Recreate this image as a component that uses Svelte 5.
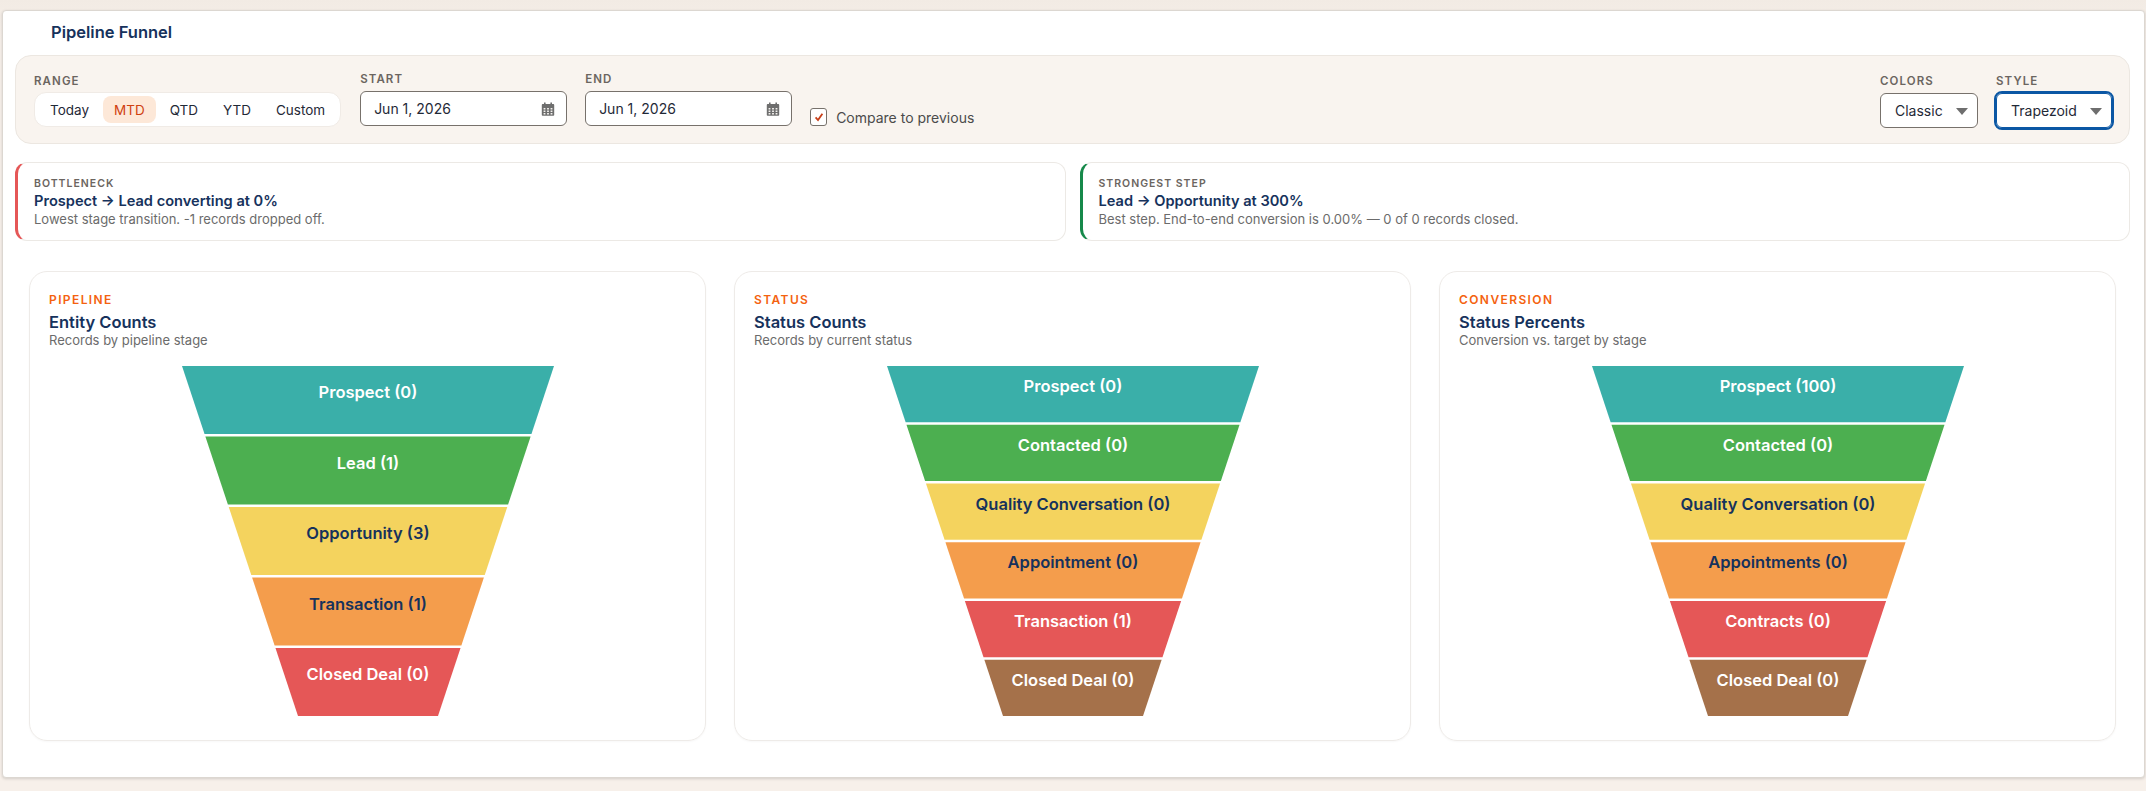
<script>
	const ranges = ['Today', 'MTD', 'QTD', 'YTD', 'Custom'];

	const insights = [
		{
			kind: 'bad',
			label: 'BOTTLENECK',
			title: 'Prospect → Lead converting at 0%',
			text: 'Lowest stage transition. -1 records dropped off.'
		},
		{
			kind: 'good',
			label: 'STRONGEST STEP',
			title: 'Lead → Opportunity at 300%',
			text: 'Best step. End-to-end conversion is 0.00% — 0 of 0 records closed.'
		}
	];

	const teal = { fill: '#3aafa9', ink: '#fff' };
	const green = { fill: '#4caf50', ink: '#fff' };
	const yellow = { fill: '#f4d35e', ink: '#16325c' };
	const orange = { fill: '#f49d4c', ink: '#16325c' };
	const red = { fill: '#e55757', ink: '#fff' };
	const brown = { fill: '#a5714a', ink: '#fff' };

	const charts = [
		{
			eyebrow: 'PIPELINE',
			title: 'Entity Counts',
			sub: 'Records by pipeline stage',
			stages: [
				{ name: 'Prospect (0)', ...teal },
				{ name: 'Lead (1)', ...green },
				{ name: 'Opportunity (3)', ...yellow },
				{ name: 'Transaction (1)', ...orange },
				{ name: 'Closed Deal (0)', ...red }
			]
		},
		{
			eyebrow: 'STATUS',
			title: 'Status Counts',
			sub: 'Records by current status',
			stages: [
				{ name: 'Prospect (0)', ...teal },
				{ name: 'Contacted (0)', ...green },
				{ name: 'Quality Conversation (0)', ...yellow },
				{ name: 'Appointment (0)', ...orange },
				{ name: 'Transaction (1)', ...red },
				{ name: 'Closed Deal (0)', ...brown }
			]
		},
		{
			eyebrow: 'CONVERSION',
			title: 'Status Percents',
			sub: 'Conversion vs. target by stage',
			stages: [
				{ name: 'Prospect (100)', ...teal },
				{ name: 'Contacted (0)', ...green },
				{ name: 'Quality Conversation (0)', ...yellow },
				{ name: 'Appointments (0)', ...orange },
				{ name: 'Contracts (0)', ...red },
				{ name: 'Closed Deal (0)', ...brown }
			]
		}
	];

	const W = 372;
	const H = 350;
	const GAP = 2.5;
	const BOTTOM = 140;

	// trapezoid slices: the sides run straight from the top width to the bottom width
	function slices(stages) {
		const pitch = (H + GAP) / stages.length;
		const half = (y) => (W - (W - BOTTOM) * (y / H)) / 2;
		return stages.map((s, i) => {
			const top = i * pitch;
			const bot = top + pitch - GAP;
			const c = W / 2;
			return {
				...s,
				points: `${c - half(top)},${top} ${c + half(top)},${top} ${c + half(bot)},${bot} ${c - half(bot)},${bot}`,
				labelY: (top + bot) / 2 - 8
			};
		});
	}
</script>

{#snippet calendar()}
	<svg class="cal" viewBox="0 0 14 14" width="14" height="14">
		<path fill="#6e6e6e" d="M3 0.5h1.6v1.6h4.8V0.5H11v1.6h1.4a.8.8 0 0 1 .8.8v10a.8.8 0 0 1-.8.8H1.6a.8.8 0 0 1-.8-.8v-10a.8.8 0 0 1 .8-.8H3z" />
		<path fill="#f4f2ef" d="M2.6 6h1.8v1.5H2.6zM6.1 6h1.8v1.5H6.1zM9.6 6h1.8v1.5H9.6zM2.6 8.6h1.8v1.5H2.6zM6.1 8.6h1.8v1.5H6.1zM9.6 8.6h1.8v1.5H9.6zM2.6 11.1h1.8v1.3H2.6zM6.1 11.1h1.8v1.3H6.1zM9.6 11.1h1.8v1.3H9.6z" />
	</svg>
{/snippet}

<div class="panel">
	<h1>Pipeline Funnel</h1>

	<div class="filters">
		<div class="field range">
			<span class="cap">RANGE</span>
			<div class="segments">
				{#each ranges as r}
					<button class:on={r === 'MTD'}>{r}</button>
				{/each}
			</div>
		</div>

		<div class="field date">
			<span class="cap">START</span>
			<div class="input">Jun 1, 2026 {@render calendar()}</div>
		</div>

		<div class="field date">
			<span class="cap">END</span>
			<div class="input">Jun 1, 2026 {@render calendar()}</div>
		</div>

		<label class="compare">
			<span class="box">
				<svg viewBox="0 0 10 10" width="10" height="10">
					<path d="M1.6 5.4 4 8 8.4 1.8" fill="none" stroke="#c8401a" stroke-width="1.8" />
				</svg>
			</span>
			Compare to previous
		</label>

		<div class="field colors">
			<span class="cap">COLORS</span>
			<div class="select classic">Classic<i></i></div>
		</div>

		<div class="field">
			<span class="cap">STYLE</span>
			<div class="select trapezoid">Trapezoid<i></i></div>
		</div>
	</div>

	<div class="insights">
		{#each insights as item}
			<div class="insight {item.kind}">
				<span class="tag">{item.label}</span>
				<strong>{item.title}</strong>
				<p>{item.text}</p>
			</div>
		{/each}
	</div>

	<div class="charts">
		{#each charts as chart}
			<section class="card">
				<span class="eyebrow">{chart.eyebrow}</span>
				<h2>{chart.title}</h2>
				<p>{chart.sub}</p>
				<svg class="funnel" width={W} height={H} viewBox="0 0 {W} {H}">
					{#each slices(chart.stages) as s}
						<polygon points={s.points} fill={s.fill} />
						<text x={W / 2} y={s.labelY} fill={s.ink} text-anchor="middle" dominant-baseline="central">{s.name}</text>
					{/each}
				</svg>
			</section>
		{/each}
	</div>
</div>

<style>
	:global(body) {
		background: linear-gradient(#f2ebe4, #f7f0ea 40px);
		font-family: Inter, 'Noto Sans', sans-serif;
		color: #16325c;
	}

	.panel {
		box-sizing: border-box;
		height: 768px;
		margin: 10px 1px 13px 2px;
		padding: 0 14px 0 12px;
		background: #fff;
		border: 1px solid #dcd7d1;
		border-radius: 4px;
		box-shadow: 0 1px 3px rgba(0, 0, 0, 0.15);
	}

	h1 {
		margin: 0;
		padding: 12px 0 0 36px;
		height: 31px;
		box-sizing: border-box;
		font-size: 16.5px;
		line-height: 18px;
		font-weight: 600;
	}

	.filters {
		display: flex;
		align-items: flex-end;
		gap: 18px;
		height: 89px;
		box-sizing: border-box;
		margin-top: 13px;
		padding: 0 17px 15px 18px;
		background: #f9f4ef;
		border: 1px solid #ece7e1;
		border-radius: 16px;
	}

	.field {
		display: flex;
		flex-direction: column;
	}

	.cap {
		font-size: 11.5px;
		line-height: 14px;
		font-weight: 600;
		letter-spacing: 1.1px;
		color: #6b6560;
	}

	.range {
		margin: 0 1px 1px 0;
		gap: 4px;
	}

	.segments {
		display: flex;
		align-items: center;
		gap: 3px;
		height: 35px;
		box-sizing: border-box;
		padding: 0 4px;
		background: #fff;
		border: 1px solid #f0ebe6;
		border-radius: 12px;
	}

	.segments button {
		height: 27px;
		padding: 0 11px;
		border: 0;
		border-radius: 8px;
		background: none;
		font: 400 13.5px Inter, sans-serif;
		color: #1f2937;
	}

	.segments button.on {
		background: #fde8d8;
		color: #d0400f;
	}

	.date {
		margin-bottom: 2px;
		gap: 5px;
	}

	.input {
		display: flex;
		align-items: center;
		justify-content: space-between;
		box-sizing: border-box;
		width: 207px;
		height: 35px;
		padding: 0 11px 0 13px;
		background: #fff;
		border: 1px solid #77716b;
		border-radius: 6px;
		font-size: 14px;
		color: #1f2937;
	}

	.compare {
		display: flex;
		align-items: center;
		gap: 9px;
		margin-bottom: 2px;
		font-size: 14px;
		color: #4b4b4b;
	}

	.box {
		display: flex;
		align-items: center;
		justify-content: center;
		box-sizing: border-box;
		width: 17px;
		height: 18px;
		background: #fff;
		border: 1px solid #77716b;
		border-radius: 3px;
	}

	.colors {
		margin-left: auto;
	}

	.colors,
	.colors + .field {
		gap: 5px;
	}

	.select {
		position: relative;
		box-sizing: border-box;
		height: 35px;
		padding-left: 14px;
		line-height: 33px;
		background: #fff;
		border: 1px solid #77716b;
		border-radius: 6px;
		font-size: 14px;
		color: #1f2937;
	}

	.classic {
		width: 98px;
	}

	.trapezoid {
		width: 116px;
		border-color: #0b57a4;
		outline: 2px solid #0b57a4;
	}

	.select i {
		position: absolute;
		right: 9px;
		top: 14px;
		border-left: 6px solid transparent;
		border-right: 6px solid transparent;
		border-top: 7px solid #6e6e6e;
	}

	.insights {
		display: grid;
		grid-template-columns: 1fr 1fr;
		gap: 14px;
		margin-top: 18px;
	}

	.insight {
		display: flex;
		flex-direction: column;
		box-sizing: border-box;
		height: 79px;
		padding: 14px 18px 0 16px;
		border: 1px solid #ece9e5;
		border-left: 3px solid;
		border-radius: 12px;
	}

	.insight.bad {
		border-left-color: #e55757;
	}

	.insight.good {
		border-left-color: #16894a;
	}

	.tag {
		font-size: 10.5px;
		line-height: 14px;
		font-weight: 600;
		letter-spacing: 1px;
		color: #6b6560;
	}

	.insight strong {
		margin-top: 1px;
		font-size: 14.6px;
		line-height: 18px;
		font-weight: 600;
	}

	.insight p {
		margin: 1px 0 0;
		font-size: 13px;
		line-height: 16px;
		color: #6b6b6b;
	}

	.charts {
		display: grid;
		grid-template-columns: repeat(3, 1fr);
		gap: 28px;
		margin: 30px 0 0 14px;
		width: 2087px;
	}

	.card {
		display: flex;
		flex-direction: column;
		box-sizing: border-box;
		height: 470px;
		padding: 21px 19px 0;
		border: 1px solid #eeebe8;
		border-radius: 18px;
		box-shadow: 0 1px 2px rgba(0, 0, 0, 0.03);
	}

	.eyebrow {
		font-size: 12px;
		line-height: 14px;
		font-weight: 600;
		letter-spacing: 1.4px;
		color: #f4620f;
	}

	h2 {
		margin: 5px 0 0;
		font-size: 16.5px;
		line-height: 20px;
		font-weight: 600;
	}

	.card p {
		margin: 0;
		font-size: 13px;
		line-height: 16px;
		color: #6b6b6b;
	}

	.funnel {
		margin: 18px auto 0;
		display: block;
	}

	.funnel text {
		font-size: 16.5px;
		font-weight: 600;
	}
</style>
